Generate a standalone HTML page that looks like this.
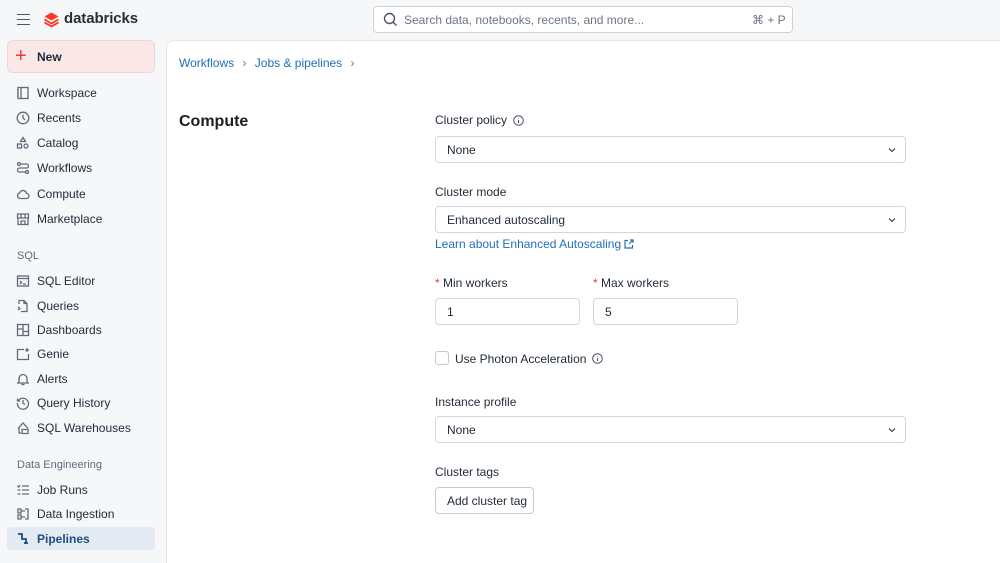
<!DOCTYPE html>
<html style="width:1000px;height:563px;overflow:hidden"><head><meta charset="utf-8"><style>
*{box-sizing:border-box;margin:0;padding:0}
body{width:1000px;height:563px;overflow:hidden;background:#f6f7f9;font-family:"Liberation Sans",sans-serif;color:#1f2a37;font-size:12px;position:relative}
.a{position:absolute}
.nav{position:absolute;left:16px;display:flex;align-items:center;font-size:12px;color:#1f2a37}
.nav svg{width:14px;height:14px;margin-right:7px;stroke:#5f6b7a;fill:none;stroke-width:1.3}
.sec{position:absolute;left:17px;font-size:11px;color:#5f6b7a}
.main{position:absolute;left:166px;top:40px;width:834px;height:523px;background:#fff;border:1px solid #e3e6ea;border-right:none;border-bottom:none;border-top-left-radius:8px}
.lbl{position:absolute;font-size:12px;color:#1f2a37}
.box{position:absolute;border:1px solid #d1d6dc;border-radius:4px;background:#fff;font-size:12px;padding-left:11px;display:flex;align-items:center;color:#1f2a37}
.chev{position:absolute;right:9px;top:9px;width:8px;height:8px}
.req{color:#d93f3f}
</style></head><body>
<div class="a" style="left:17px;top:14px;width:13px;height:11px;border-top:1.5px solid #4a5563;border-bottom:1.5px solid #4a5563"><div style="margin-top:3.5px;border-top:1.5px solid #4a5563"></div></div>
<svg class="a" style="left:43px;top:11px" width="17" height="17" viewBox="0 0 17 17"><path d="M8.5 1.5L15.5 5.5 8.5 9.5 1.5 5.5Z" fill="#ff3621"/><path d="M1.5 8.5l7 4 7-4M1.5 11.5l7 4 7-4" stroke="#ff3621" stroke-width="1.8" fill="none"/></svg>
<div class="a" style="left:64px;top:10px;font-size:15px;font-weight:bold;color:#2b2f33;letter-spacing:-0.1px">databricks</div>
<div class="a" style="left:373px;top:6px;width:420px;height:27px;border:1px solid #cdd3da;border-radius:4px;background:#fff"></div>
<svg class="a" style="left:383px;top:12px" width="15" height="15" viewBox="0 0 15 15" fill="none" stroke="#4a5563" stroke-width="1.4"><circle cx="6.5" cy="6.5" r="5"/><path d="M10.2 10.2L13.5 13.5"/></svg>
<div class="a" style="left:404px;top:13px;font-size:12px;color:#6b7684">Search data, notebooks, recents, and more...</div>
<div class="a" style="left:752px;top:13px;font-size:12px;color:#6b7684">⌘ + P</div>
<div class="a" style="left:7px;top:40px;width:148px;height:33px;background:#fae8e8;border:1px solid #f4d3d3;border-radius:6px"></div>
<div class="a" style="left:15px;top:46px;font-size:20px;color:#e8383d;line-height:20px">+</div>
<div class="a" style="left:37px;top:50px;font-size:12px;font-weight:bold;color:#1f2a37">New</div>
<div class="nav" style="top:86px"><svg viewBox="0 0 14 14"><rect x="2" y="1.5" width="10" height="11"/><path d="M5 1.5v11M2 4h-1M2 7h-1M2 10h-1"/></svg>Workspace</div>
<div class="nav" style="top:111px"><svg viewBox="0 0 14 14"><circle cx="7" cy="7" r="5.8"/><path d="M7 3.5V7l2 2"/></svg>Recents</div>
<div class="nav" style="top:136px"><svg viewBox="0 0 14 14"><path d="M7 1.5l2.5 4h-5z"/><rect x="1.5" y="8" width="4" height="4"/><circle cx="10" cy="10" r="2"/></svg>Catalog</div>
<div class="nav" style="top:161px"><svg viewBox="0 0 14 14"><circle cx="3" cy="3" r="1.5"/><circle cx="11" cy="11" r="1.5"/><path d="M4.5 3h6a2 2 0 010 4h-7a2 2 0 000 4h6"/></svg>Workflows</div>
<div class="nav" style="top:187px"><svg viewBox="0 0 14 14"><path d="M4 11.5h6.5a2.5 2.5 0 000-5 3.5 3.5 0 00-6.8-.5A2.8 2.8 0 004 11.5z"/></svg>Compute</div>
<div class="nav" style="top:212px"><svg viewBox="0 0 14 14"><path d="M2 6v6.5h10V6M1.5 2h11v4h-11zM5 2v4M9 2v4M5 12.5V9h4v3.5"/></svg>Marketplace</div>
<div class="sec" style="top:250px">SQL</div>
<div class="nav" style="top:274px"><svg viewBox="0 0 14 14"><rect x="1.5" y="2" width="11" height="10"/><path d="M1.5 4.5h11M4 7l1.5 1.5L4 10M7 10h3"/></svg>SQL Editor</div>
<div class="nav" style="top:299px"><svg viewBox="0 0 14 14"><path d="M3 5V1.5h5l3 3v8H6M8 1.5v3h3M2 8l2 1.5L2 11M5 12.5h1"/></svg>Queries</div>
<div class="nav" style="top:323px"><svg viewBox="0 0 14 14"><rect x="1.5" y="1.5" width="11" height="11"/><path d="M7 1.5v11M1.5 6h5.5M7 8.5h5.5"/></svg>Dashboards</div>
<div class="nav" style="top:347px"><svg viewBox="0 0 14 14"><path d="M8 2.5H1.5v10h11V7M11 1v4M9 3h4"/></svg>Genie</div>
<div class="nav" style="top:372px"><svg viewBox="0 0 14 14"><path d="M3 10V6.5a4 4 0 018 0V10l1 1H2zM5.5 12.5h3"/></svg>Alerts</div>
<div class="nav" style="top:396px"><svg viewBox="0 0 14 14"><path d="M2.5 4.5A5.5 5.5 0 111.5 7M1.5 2.5v2.5H4M7 4v3l2 1.5"/></svg>Query History</div>
<div class="nav" style="top:421px"><svg viewBox="0 0 14 14"><path d="M2 7.5l5-5.5 5 5.5M3 6.5V12h2M6 8.5h6v4H6z"/></svg>SQL Warehouses</div>
<div class="sec" style="top:459px">Data Engineering</div>
<div class="nav" style="top:483px"><svg viewBox="0 0 14 14"><path d="M6 3h7M6 7h7M6 11h7M1.5 3l1 1 1.5-2M1.5 7h3M1.5 11h3"/></svg>Job Runs</div>
<div class="nav" style="top:507px"><svg viewBox="0 0 14 14"><path d="M2 2h3v4H2zM2 8h3v4H2zM9 2h3v10H9M5 4h4M5 10h4"/></svg>Data Ingestion</div>
<div class="a" style="left:7px;top:527px;width:148px;height:23px;background:#e3eaf2;border-radius:4px"></div>
<div class="nav" style="top:532px;font-weight:bold;color:#1c4f82"><svg viewBox="0 0 14 14" style="stroke:#1c4f82;stroke-width:1.8"><path d="M2 2h4v5h4v5"/><path d="M8 11h4"/></svg>Pipelines</div>
<div class="main"></div>
<div class="a" style="left:179px;top:56px;font-size:12px;color:#2270b8">Workflows <span style="color:#6b7684;margin:0 5px">›</span> Jobs &amp; pipelines <span style="color:#6b7684;margin-left:5px">›</span></div>
<div class="a" style="left:179px;top:113px;font-size:16px;font-weight:bold;color:#1b1f23">Compute</div>
<div class="lbl" style="left:435px;top:113px">Cluster policy <svg style="vertical-align:-2px;margin-left:3px" width="11" height="11" viewBox="0 0 11 11" fill="none" stroke="#4a5563"><circle cx="5.5" cy="5.5" r="4.8"/><path d="M5.5 5v3M5.5 3v.6"/></svg></div>
<div class="box" style="left:435px;top:136px;width:471px;height:27px">None<svg class="chev" viewBox="0 0 8 8" fill="none" stroke="#4a5563" stroke-width="1.3"><path d="M1 2.5l3 3 3-3"/></svg></div>
<div class="lbl" style="left:435px;top:185px">Cluster mode</div>
<div class="box" style="left:435px;top:206px;width:471px;height:27px">Enhanced autoscaling<svg class="chev" viewBox="0 0 8 8" fill="none" stroke="#4a5563" stroke-width="1.3"><path d="M1 2.5l3 3 3-3"/></svg></div>
<div class="lbl" style="left:435px;top:237px;color:#2270b8">Learn about Enhanced Autoscaling <svg style="vertical-align:-1px" width="10" height="10" viewBox="0 0 10 10" fill="none" stroke="#2270b8" stroke-width="1.2"><path d="M4 1.5H1v7.5h7.5V6M6 1h3v3M9 1L5 5"/></svg></div>
<div class="lbl" style="left:435px;top:276px"><span class="req">*</span> Min workers</div>
<div class="lbl" style="left:593px;top:276px"><span class="req">*</span> Max workers</div>
<div class="box" style="left:435px;top:298px;width:145px;height:27px">1</div>
<div class="box" style="left:593px;top:298px;width:145px;height:27px">5</div>
<div class="a" style="left:435px;top:351px;width:14px;height:14px;border:1px solid #c3cad2;border-radius:3px"></div>
<div class="lbl" style="left:455px;top:352px">Use Photon Acceleration <svg style="vertical-align:-1px;margin-left:2px" width="11" height="11" viewBox="0 0 11 11" fill="none" stroke="#4a5563"><circle cx="5.5" cy="5.5" r="4.8"/><path d="M5.5 5v3M5.5 3v.6"/></svg></div>
<div class="lbl" style="left:435px;top:395px">Instance profile</div>
<div class="box" style="left:435px;top:416px;width:471px;height:27px">None<svg class="chev" viewBox="0 0 8 8" fill="none" stroke="#4a5563" stroke-width="1.3"><path d="M1 2.5l3 3 3-3"/></svg></div>
<div class="lbl" style="left:435px;top:465px">Cluster tags</div>
<div class="box" style="left:435px;top:487px;width:99px;height:27px;border-color:#c3cad2">Add cluster tag</div>
</body></html>
